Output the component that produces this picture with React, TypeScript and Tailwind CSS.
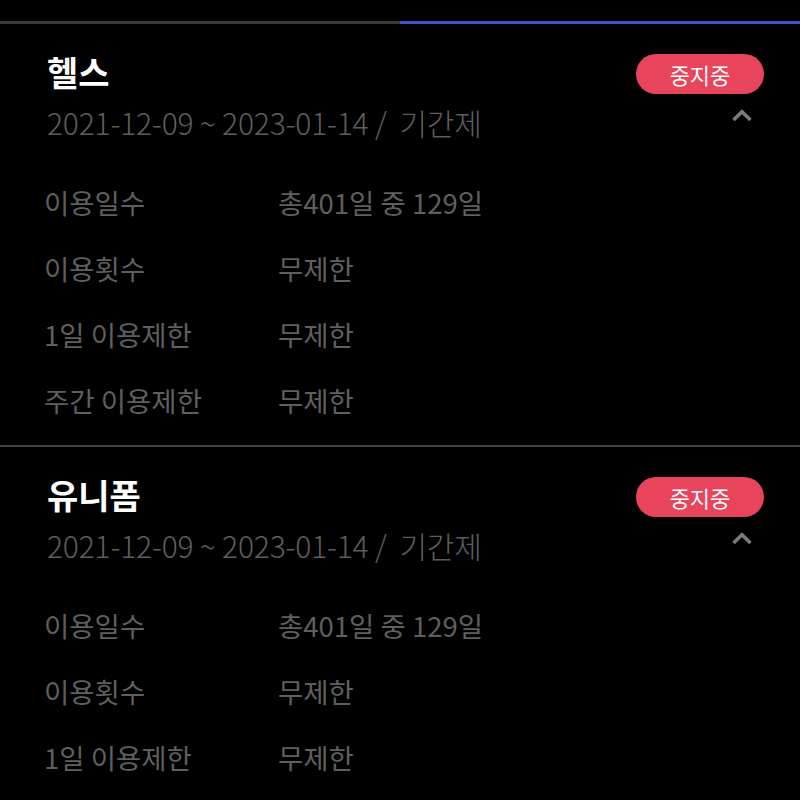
import React from 'react';

interface Row {
  label: string;
  value: string;
}

interface PassProps {
  title: string;
  period: string;
  rows: Row[];
}

const ChevronUp = () => (
  <svg width="22" height="13" viewBox="0 0 22 13" className="text-[#7c7c7c]">
    <polyline
      points="2.5,11 11,2.8 19.5,11"
      fill="none"
      stroke="currentColor"
      strokeWidth="3.6"
      strokeLinejoin="miter"
    />
  </svg>
);

const PassCard: React.FC<PassProps> = ({ title, period, rows }) => {
  return (
    <div className="pl-[44px] pr-[36px] pt-[30px] pb-[11px]">
      {/* 제목 + 상태 */}
      <div className="flex h-[40px] items-center justify-between">
        <h2 className="ml-[3px] -mt-[4px] text-[34px] font-bold leading-none text-white">{title}</h2>
        <span className="flex h-[40px] w-[128px] items-center justify-center rounded-full bg-[#e8445b] text-[22px] leading-none text-white">
          중지중
        </span>
      </div>

      {/* 기간 */}
      <div className="mt-[10px] flex h-[36px] items-center justify-between">
        <p className="ml-[3px] whitespace-pre text-[30px] font-light leading-none tracking-[-0.2px] text-[#5e5e5e]">
          {period}
        </p>
        <div className="mr-[11px] -mt-[14px]">
          <ChevronUp />
        </div>
      </div>

      {/* 이용 정보 */}
      <div className="mt-[30px]">
        {rows.map((row) => (
          <div key={row.label} className="flex h-[66px] items-center text-[27.5px] leading-none text-[#5f5f5f]">
            <span className="w-[234px]">{row.label}</span>
            <span>{row.value}</span>
          </div>
        ))}
      </div>
    </div>
  );
};

const rowsFull: Row[] = [
  { label: '이용일수', value: '총401일 중 129일' },
  { label: '이용횟수', value: '무제한' },
  { label: '1일 이용제한', value: '무제한' },
  { label: '주간 이용제한', value: '무제한' },
];

export default function App() {
  return (
    <div className="h-[800px] overflow-hidden bg-black pt-[21px] font-['Noto_Sans_CJK_KR','Noto_Sans',sans-serif]">
      {/* 진행 바 */}
      <div className="flex h-[3px]">
        <div className="w-1/2 bg-[#3a3a3a]" />
        <div className="w-1/2 bg-[#3b57cb]" />
      </div>

      <PassCard title="헬스" period="2021-12-09 ~ 2023-01-14 /  기간제" rows={rowsFull} />
      <div className="h-[2px] bg-[#444444]" />
      <PassCard title="유니폼" period="2021-12-09 ~ 2023-01-14 /  기간제" rows={rowsFull.slice(0, 3)} />
    </div>
  );
}
